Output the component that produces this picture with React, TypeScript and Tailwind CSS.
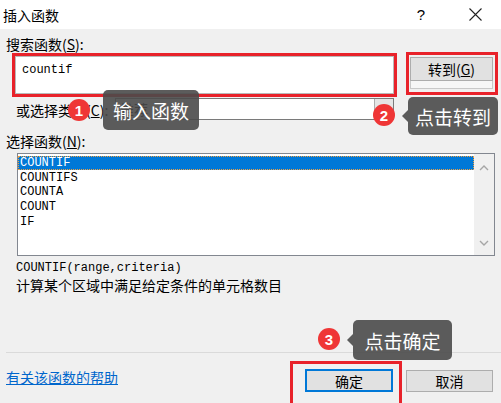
import type { ReactNode } from 'react';

const rows = ['COUNTIF', 'COUNTIFS', 'COUNTA', 'COUNT', 'IF'];

function Badge({ n }: { n: number }) {
  return (
    <div className="w-[22px] h-[22px] shrink-0 rounded-full bg-[#ef3636] text-white text-[15px] font-bold leading-none flex items-center justify-center font-['Liberation_Sans',sans-serif]">
      {n}
    </div>
  );
}

function Tip({ children, arrow = true }: { children: ReactNode; arrow?: boolean }) {
  return (
    <div className="relative w-full h-full rounded-[5px] bg-[#4a4a4a]/90 text-white text-[19px] leading-none flex items-center justify-center">
      {arrow && (
        <div className="absolute left-[-6px] top-1/2 -translate-y-1/2 w-0 h-0 border-y-[6px] border-y-transparent border-r-[6px] border-r-[#5b5b5b]" />
      )}
      {children}
    </div>
  );
}

function Chevron({ up }: { up?: boolean }) {
  return (
    <svg width="10" height="6" viewBox="0 0 10 6" fill="none">
      <path
        d={up ? 'M1 5 L5 1 L9 5' : 'M1 1 L5 5 L9 1'}
        stroke="#a6a6a6"
        strokeWidth="1.4"
      />
    </svg>
  );
}

export default function App() {
  return (
    <div className="relative w-[501px] h-[403px] overflow-hidden bg-[#f0f0f0] text-black text-[14px] font-['Noto_Sans_CJK_SC','Noto_Sans',sans-serif]">
      {/* title bar */}
      <div className="h-[29px] bg-white flex items-center pl-[3px]">
        <span className="leading-[18px]">插入函数</span>
        <span className="ml-auto text-[15px] leading-none font-['Liberation_Sans',sans-serif]">?</span>
        <svg className="ml-[44px] mr-[19px]" width="13" height="13" viewBox="0 0 13 13">
          <path d="M0.5 0.5 L12.5 12.5 M12.5 0.5 L0.5 12.5" stroke="#222" strokeWidth="1.1" />
        </svg>
      </div>

      <div className="mt-[6px] h-[18px] leading-[18px] pl-[6px]">
        搜索函数(<span className="underline">S</span>):
      </div>

      {/* search + goto */}
      <div className="flex items-start">
        <div className="ml-[12px] w-[385px] h-[44px] border-[3px] border-[#e8222a]">
          <div className="h-full bg-white border border-[#b9b9b9] pl-[6px] pt-[6px] text-[12px] leading-[14px] font-['Liberation_Mono',monospace]">
            countif
          </div>
        </div>
        <div className="ml-[9px] mt-[-1px] w-[92px] h-[43px] border-[3px] border-[#e8222a] pl-[1px] pt-[2px]">
          <div className="w-[83px] h-[24px] border border-[#adadad] bg-[#e1e1e1] flex items-center justify-center leading-none">
            转到(<span className="underline">G</span>)
          </div>
          <div className="w-[83px] h-[8px] border-x border-b border-[#c9c9c9] bg-[#f7f7f7]" />
        </div>
      </div>

      {/* category */}
      <div className="flex h-[23px]">
        <div className="w-[115px] pl-[16px] pt-[4px] leading-[18px]">
          或选择类别(<span className="underline">C</span>):
        </div>
        <div className="mt-[1px] w-[279px] h-[22px] border border-[#7a7a7a] bg-white flex">
          <span className="flex-1 pl-[4px] leading-[20px]">推荐</span>
          <div className="w-[19px] bg-[#e5e5e5] border-l border-[#adadad] flex items-center justify-center">
            <Chevron />
          </div>
        </div>
      </div>

      <div className="mt-[12px] h-[18px] leading-[18px] pl-[6px]">
        选择函数(<span className="underline">N</span>):
      </div>

      {/* list */}
      <div className="mt-[3px] ml-[17px] w-[478px] h-[103px] border border-[#828790] bg-white flex">
        <div className="flex-1 pt-[2px] text-[12px] font-['Liberation_Mono',monospace]">
          {rows.map((r, i) => (
            <div
              key={r}
              className={
                i === 0
                  ? 'h-[14px] leading-[12px] pl-[1px] bg-[#0078d7] text-white border border-dotted border-[#f0a040] mb-[0.7px]'
                  : 'h-[14.7px] leading-[14.7px] pl-[2px]'
              }
            >
              {r}
            </div>
          ))}
        </div>
        <div className="w-[20px] bg-[#f0f0f0] flex flex-col items-center justify-between pt-[11px] pb-[9px]">
          <Chevron up />
          <Chevron />
        </div>
      </div>

      <div className="mt-[5px] h-[15px] leading-[15px] pl-[16px] text-[12px] font-['Liberation_Mono',monospace]">
        COUNTIF(range,criteria)
      </div>
      <div className="h-[18px] leading-[18px] pl-[16px]">计算某个区域中满足给定条件的单元格数目</div>

      <div className="mt-[58px] ml-[6px] h-[1px] bg-[#dadada]" />

      {/* bottom */}
      <div className="flex items-start">
        <span className="mt-[15px] pl-[6px] leading-[18px] text-[#0066cc] underline">有关该函数的帮助</span>
        <div className="ml-auto mt-[16px] w-[88px] h-[23px] border-2 border-[#0078d7] bg-[#e1e1e1] flex items-center justify-center leading-none">
          确定
        </div>
        <div className="ml-[13px] mr-[8px] mt-[17px] w-[87px] h-[22px] border border-[#adadad] bg-[#e1e1e1] flex items-center justify-center leading-none">
          取消
        </div>
      </div>

      {/* annotations */}
      <div className="absolute left-[290px] top-[361px] w-[112px] h-[46px] border-[3px] border-[#e8222a]" />

      <div className="absolute left-[68px] top-[99px]">
        <Badge n={1} />
      </div>
      <div className="absolute left-[103px] top-[90px] w-[96px] h-[40px]">
        <Tip arrow={false}>输入函数</Tip>
      </div>

      <div className="absolute left-[373px] top-[104px]">
        <Badge n={2} />
      </div>
      <div className="absolute left-[408px] top-[97px] w-[90px] h-[38px]">
        <Tip>点击转到</Tip>
      </div>

      <div className="absolute left-[318px] top-[328px]">
        <Badge n={3} />
      </div>
      <div className="absolute left-[353px] top-[320px] w-[99px] h-[40px]">
        <Tip>点击确定</Tip>
      </div>
    </div>
  );
}
